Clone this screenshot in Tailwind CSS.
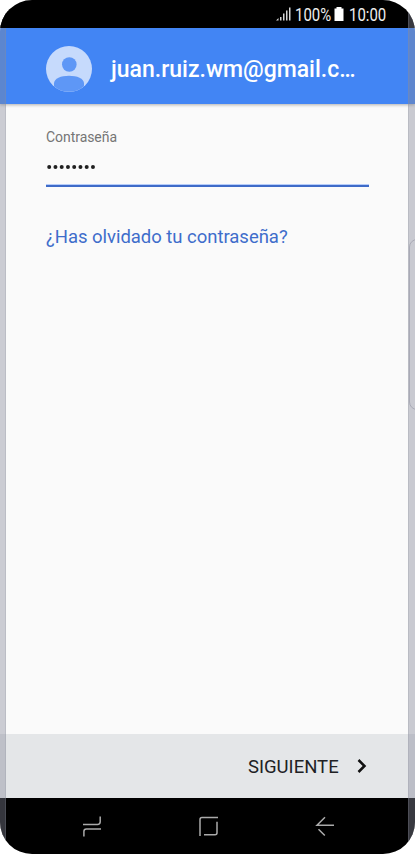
<!DOCTYPE html>
<html lang="es">
<head>
<meta charset="utf-8">
<title>Contraseña</title>
<script src="https://cdn.jsdelivr.net/npm/@tailwindcss/browser@4"></script>
</head>
<body class="bg-white font-['Roboto',sans-serif]">
<div class="relative flex h-[854px] w-[415px] flex-col overflow-hidden rounded-[32px] bg-[#fafafa]">
  <div class="flex h-7 shrink-0 items-center bg-black pl-[276px] text-[18px] leading-7 text-[#eee]">
    <svg class="h-[14px] w-[15px] shrink-0" viewBox="0 0 15 14" fill="#d5d5d5"><path d="M0 13.500 2.500 11v2.500zM4 10h1.500v3.500H4zM7 6.500h1.500v7H7zM10 3.500h1.500v10H10zM13 .500h1.500v13H13z"/></svg>
    <span class="ml-1 block w-[36px] origin-left scale-x-[.83] whitespace-nowrap pt-px">100%</span>
    <svg class="ml-[3px] h-[14px] w-[10px] shrink-0" viewBox="0 0 10 14" fill="#fff"><path d="M2.500 0h5v1.500H9.500V14H.500V1.500h2z"/></svg>
    <span class="ml-[5px] block w-[40px] origin-left scale-x-[.83] whitespace-nowrap pt-px">10:00</span>
  </div>
  <header class="z-[1] flex h-[76px] shrink-0 items-center bg-[#4285f4] pt-[6px] pl-[46px] shadow-[0_1px_3px_rgba(0,0,0,.3)]">
    <svg class="mb-px h-[46px] w-[46px] shrink-0" viewBox="0 0 46 46"><circle cx="23" cy="23" r="23" fill="#c6dafc"/><circle cx="23.300" cy="18.500" r="7.300" fill="#5e97f6"/><path d="M8 40.300v-2.800c0-5 7-7.700 15-7.700s15 2.700 15 7.700v2.800A23 23 0 0 1 8 40.300z" fill="#5e97f6"/></svg>
    <span class="ml-[19px] whitespace-nowrap pt-[2px] text-[23px] leading-7 font-medium text-white">juan.ruiz.wm@gmail.c…</span>
  </header>
  <main class="flex grow flex-col px-[46px] pt-[24px]">
    <label class="text-[14px] leading-[18px] tracking-[-0.05px] text-[#757575]">Contraseña</label>
    <div class="flex h-[41px] w-[323px] items-center border-b-[2px] border-[#3e6bc8] pt-[3px] pl-[1px] shadow-[inset_0_-1px_0_#b5ccfa]">
      <svg class="h-1 w-[50px]" viewBox="0 0 50 4" fill="#202020"><circle cx="2.200" cy="2" r="2"/><circle cx="8.450" cy="2" r="2"/><circle cx="14.700" cy="2" r="2"/><circle cx="20.950" cy="2" r="2"/><circle cx="27.200" cy="2" r="2"/><circle cx="33.450" cy="2" r="2"/><circle cx="39.700" cy="2" r="2"/><circle cx="45.950" cy="2" r="2"/></svg>
    </div>
    <a class="mt-[38px] whitespace-nowrap text-[18.5px] leading-6 tracking-[-0.03px] text-[#3e6dcb]">¿Has olvidado tu contraseña?</a>
  </main>
  <footer class="flex h-[64px] shrink-0 items-center bg-[#e4e6e8] pt-[1px] pl-[248px]">
    <span class="w-[91px] whitespace-nowrap text-[18.500px] leading-6 text-[#202124]">SIGUIENTE</span>
    <svg class="mb-px ml-[18px] h-[14px] w-[10px]" viewBox="0 0 10 14" fill="none" stroke="#111" stroke-width="2.500"><path d="m1.500 1 6 6-6 6"/></svg>
  </footer>
  <nav class="flex h-14 shrink-0 bg-black pl-[83px]">
    <svg class="mt-[17px] h-[22px] w-[252px]" viewBox="0 0 252 22" fill="none" stroke="#aaa" stroke-width="1.500"><path d="M0 9.500h14.500q2.700 0 2.700-2.700V1.500M.900 21.500v-5q0-2.500 2.500-2.500H18M117 21V4.500q0-2 2-2h16M121 19.800h11q2 0 2-2V6.800M242 2.300l-8 8h17M235.500 14.200l6.300 6.300"/></svg>
  </nav>
  <div class="pointer-events-none absolute inset-y-0 left-0 z-[2] w-[6px] border-r border-[#8c8e9a]/25 bg-[#858799]/40"></div>
  <div class="pointer-events-none absolute inset-y-0 right-0 z-[2] w-[7px] border-l border-[#8c8e9a]/25 bg-[#858799]/42"></div>
  <div class="absolute top-0 left-0 z-[3] h-7 w-2 bg-black"></div>
  <div class="absolute top-[239px] -right-[10px] z-[3] h-[171px] w-4 rounded-lg border border-[#a9aab6]"></div>
</div>
</body>
</html>
